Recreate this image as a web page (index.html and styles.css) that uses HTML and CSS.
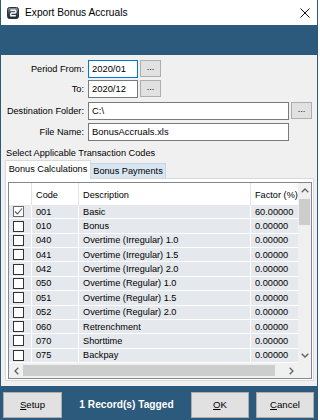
FILE: index.html
```html
<!DOCTYPE html>
<html>
<head>
<meta charset="utf-8">
<link rel="stylesheet" href="styles.css">
</head>
<body>
<div class="win">
  <div class="titlebar">
    <svg class="appicon" width="12" height="12" viewBox="0 0 12 12">
      <defs>
        <linearGradient id="ig" x1="0" y1="0" x2="0" y2="1">
          <stop offset="0" stop-color="#8a97a3"/>
          <stop offset="0.5" stop-color="#3c4a57"/>
          <stop offset="1" stop-color="#1c2631"/>
        </linearGradient>
      </defs>
      <rect x="0.5" y="0.5" width="11" height="11" rx="2" fill="url(#ig)" stroke="#2a3440" stroke-width="1"/>
      <path d="M3.5 3.3 H8.2 L8.8 4 V5.3 L8.1 6 H4.6 L3.8 6.8 V8.7 H8.8" fill="none" stroke="#fff" stroke-width="1.4"/>
    </svg>
    <span class="title">Export Bonus Accruals</span>
    <svg class="close" width="10" height="10" viewBox="0 0 10 10">
      <path d="M0.5 0.5 L9.5 9.5 M9.5 0.5 L0.5 9.5" stroke="#111" stroke-width="1" fill="none"/>
    </svg>
  </div>
  <div class="band"></div>
  <div class="body">
    <div class="frow r1">
      <div class="lbl">Period From:</div>
      <div class="field short focus">2020/01</div>
      <div class="dots">...</div>
    </div>
    <div class="frow r2">
      <div class="lbl">To:</div>
      <div class="field short">2020/12</div>
      <div class="dots">...</div>
    </div>
    <div class="frow r3">
      <div class="lbl">Destination Folder:</div>
      <div class="field long">C:\</div>
      <div class="dots">...</div>
    </div>
    <div class="frow r4">
      <div class="lbl">File Name:</div>
      <div class="field long">BonusAccruals.xls</div>
    </div>
    <div class="caption">Select Applicable Transaction Codes</div>
    <div class="tabs">
      <div class="tab active">Bonus Calculations</div>
      <div class="tab inactive">Bonus Payments</div>
    </div>
    <div class="panel">
      <div class="grid">
        <div class="gmain">
          <div class="gtable">
            <div class="row head">
              <div class="c ck"></div>
              <div class="c code">Code</div>
              <div class="c desc">Description</div>
              <div class="c fac">Factor (%)</div>
            </div>
            <div class="row">
              <div class="c ck"><span class="box checked"><svg width="9" height="9" viewBox="0 0 9 9"><path d="M1 4.5 L3.4 7 L8 1.5" fill="none" stroke="#555" stroke-width="1.1"/></svg></span></div>
              <div class="c code">001</div><div class="c desc">Basic</div><div class="c fac">60.00000</div>
            </div>
            <div class="row"><div class="c ck"><span class="box"></span></div><div class="c code">010</div><div class="c desc">Bonus</div><div class="c fac">0.00000</div></div>
            <div class="row"><div class="c ck"><span class="box"></span></div><div class="c code">040</div><div class="c desc">Overtime (Irregular) 1.0</div><div class="c fac">0.00000</div></div>
            <div class="row"><div class="c ck"><span class="box"></span></div><div class="c code">041</div><div class="c desc">Overtime (Irregular) 1.5</div><div class="c fac">0.00000</div></div>
            <div class="row"><div class="c ck"><span class="box"></span></div><div class="c code">042</div><div class="c desc">Overtime (Irregular) 2.0</div><div class="c fac">0.00000</div></div>
            <div class="row"><div class="c ck"><span class="box"></span></div><div class="c code">050</div><div class="c desc">Overtime (Regular) 1.0</div><div class="c fac">0.00000</div></div>
            <div class="row"><div class="c ck"><span class="box"></span></div><div class="c code">051</div><div class="c desc">Overtime (Regular) 1.5</div><div class="c fac">0.00000</div></div>
            <div class="row"><div class="c ck"><span class="box"></span></div><div class="c code">052</div><div class="c desc">Overtime (Regular) 2.0</div><div class="c fac">0.00000</div></div>
            <div class="row"><div class="c ck"><span class="box"></span></div><div class="c code">060</div><div class="c desc">Retrenchment</div><div class="c fac">0.00000</div></div>
            <div class="row"><div class="c ck"><span class="box"></span></div><div class="c code">070</div><div class="c desc">Shorttime</div><div class="c fac">0.00000</div></div>
            <div class="row"><div class="c ck"><span class="box"></span></div><div class="c code">075</div><div class="c desc">Backpay</div><div class="c fac">0.00000</div></div>
          </div>
          <div class="vscroll">
            <div class="sarrow"><svg width="8" height="5" viewBox="0 0 8 5"><path d="M0.7 4.3 L4 1 L7.3 4.3" fill="none" stroke="#606060" stroke-width="1.3"/></svg></div>
            <div class="vthumb"></div>
            <div class="vtrack"></div>
            <div class="sarrow"><svg width="8" height="5" viewBox="0 0 8 5"><path d="M0.7 0.7 L4 4 L7.3 0.7" fill="none" stroke="#606060" stroke-width="1.3"/></svg></div>
          </div>
        </div>
        <div class="hscroll">
          <div class="harrow"><svg width="5" height="8" viewBox="0 0 5 8"><path d="M4.3 0.7 L1 4 L4.3 7.3" fill="none" stroke="#606060" stroke-width="1.3"/></svg></div>
          <div class="hthumb"></div>
          <div class="htrack"></div>
          <div class="harrow"><svg width="5" height="8" viewBox="0 0 5 8"><path d="M0.7 0.7 L4 4 L0.7 7.3" fill="none" stroke="#606060" stroke-width="1.3"/></svg></div>
          <div class="corner"></div>
        </div>
      </div>
    </div>
  </div>
  <div class="footer">
    <div class="btn setup"><u>S</u>etup</div>
    <div class="tagged">1 Record(s) Tagged</div>
    <div class="btn ok"><u>O</u>K</div>
    <div class="btn cancel"><u>C</u>ancel</div>
  </div>
</div>
</body>
</html>
```
FILE: styles.css
```css
* { box-sizing: border-box; }
html, body { margin: 0; padding: 0; }
body {
  width: 318px;
  height: 420px;
  font-family: "Liberation Sans", Arial, sans-serif;
  font-size: 9.2px;
  color: #000;
  background: #ffffff;
}
.win {
  width: 318px;
  height: 420px;
  border: 1px solid #2c5a7c;
  border-top: none;
  display: flex;
  flex-direction: column;
  overflow: hidden;
}
.titlebar {
  height: 25px;
  flex: none;
  background: #fff;
  display: flex;
  align-items: center;
  padding: 0 6px 0 6px;
}
.appicon { flex: none; display: block; }
.title {
  margin-left: 6px;
  font-size: 10.2px;
  flex: 1;
  line-height: 12px;
  padding-top: 1px;
}
.close { display: block; flex: none; margin-right: 1px; }
.band {
  height: 30px;
  flex: none;
  background: #2c5a7c;
}
.body {
  flex: 1;
  background: #f0f0f0;
  padding-top: 5px;
  display: flex;
  flex-direction: column;
}
.frow {
  display: flex;
  align-items: center;
  height: 18px;
}
.r2 { margin-top: 2px; }
.r3 { margin-top: 4px; }
.r4 { margin-top: 3px; }
.lbl {
  width: 83px;
  text-align: right;
  margin-right: 4px;
  white-space: nowrap;
}
.field {
  height: 18px;
  background: #fff;
  border: 1px solid #7a7a7a;
  padding-left: 3px;
  line-height: 16px;
  font-size: 9.4px;
}
.field.focus { border-color: #0078d7; }
.short { width: 50px; }
.long { width: 201px; }
.dots {
  width: 21px;
  height: 17px;
  margin-left: 2px;
  background: #e1e1e1;
  border: 1px solid #adadad;
  text-align: center;
  line-height: 13px;
  font-size: 9px;
  align-self: flex-start;
}
.caption {
  margin-top: 6px;
  padding-left: 5px;
  height: 12px;
  line-height: 12px;
}
.tabs {
  margin-top: 1px;
  height: 18px;
  display: flex;
  align-items: flex-end;
  padding-left: 4px;
  position: relative;
  z-index: 1;
}
.tab {
  white-space: nowrap;
  text-align: center;
}
.tab.active {
  width: 86px;
  height: 19px;
  background: #fff;
  border: 1px solid #d9d9d9;
  border-bottom: none;
  line-height: 17px;
  margin-bottom: -1px;
}
.tab.inactive {
  width: 75px;
  height: 15px;
  background: #d8e6f2;
  border: 1px solid #c3d5e6;
  border-bottom: none;
  border-left: none;
  line-height: 15px;
}
.panel {
  margin: 0 3px 0 4px;
  height: 203px;
  background: #fff;
  border: 1px solid #d9d9d9;
  padding: 3px 1px 2px 2px;
}
.grid {
  width: 304px;
  height: 197px;
  border: 1px solid #828790;
  display: flex;
  flex-direction: column;
}
.gmain {
  display: flex;
  height: 180px;
}
.gtable {
  width: 289px;
  background: #fff;
}
.row {
  display: flex;
  height: 14.36px;
  background: #e5e8ec;
}
.row.head {
  height: 22px;
  background: #fff;
}
.c {
  height: 100%;
  border-right: 1px solid #fff;
  border-bottom: 1px solid #fff;
  padding-left: 4px;
  display: flex;
  align-items: center;
  white-space: nowrap;
  overflow: hidden;
}
.head .c {
  border-right: 1px solid #e3e3e3;
  border-bottom: none;
  padding-top: 1px;
}
.ck { width: 23px; }
.code { width: 47px; }
.desc { width: 172px; }
.fac { width: 47px; border-right: none; }
.head .fac { border-right: none; }
.box {
  display: block;
  width: 11px;
  height: 11px;
  background: #fff;
  border: 1px solid #333;
  position: relative;
}
.box.checked { border-color: #6a6a6a; }
.box svg { display: block; position: absolute; left: 0; top: 0; }
.vscroll {
  width: 13px;
  background: #f0f0f0;
  display: flex;
  flex-direction: column;
  align-items: center;
}
.sarrow {
  height: 15px;
  width: 100%;
  display: flex;
  align-items: center;
  justify-content: center;
}
.vthumb {
  width: 11px;
  height: 26px;
  background: #cdcdcd;
  margin-top: 1px;
}
.vtrack { flex: 1; }
.hscroll {
  height: 15px;
  display: flex;
  align-items: center;
  background: #f0f0f0;
}
.harrow {
  width: 14px;
  height: 100%;
  display: flex;
  align-items: center;
  justify-content: center;
}
.hthumb {
  width: 252px;
  height: 11px;
  background: #cdcdcd;
}
.htrack { flex: 1; }
.corner { width: 13px; height: 100%; background: #f0f0f0; }
.footer {
  height: 33px;
  flex: none;
  background: #2c5a7c;
  display: flex;
  align-items: flex-start;
  padding: 6px 3px 0 2px;
}
.btn {
  height: 26px;
  background: #e1e1e1;
  border: 1px solid #adadad;
  text-align: center;
  line-height: 24px;
  font-size: 9.6px;
}
.btn u { text-decoration: underline; }
.setup { width: 59px; }
.ok { width: 58px; }
.cancel { width: 58px; margin-left: 7px; }
.tagged {
  flex: 1;
  text-align: center;
  color: #fff;
  font-weight: bold;
  font-size: 10.2px;
  line-height: 26px;
}
```
